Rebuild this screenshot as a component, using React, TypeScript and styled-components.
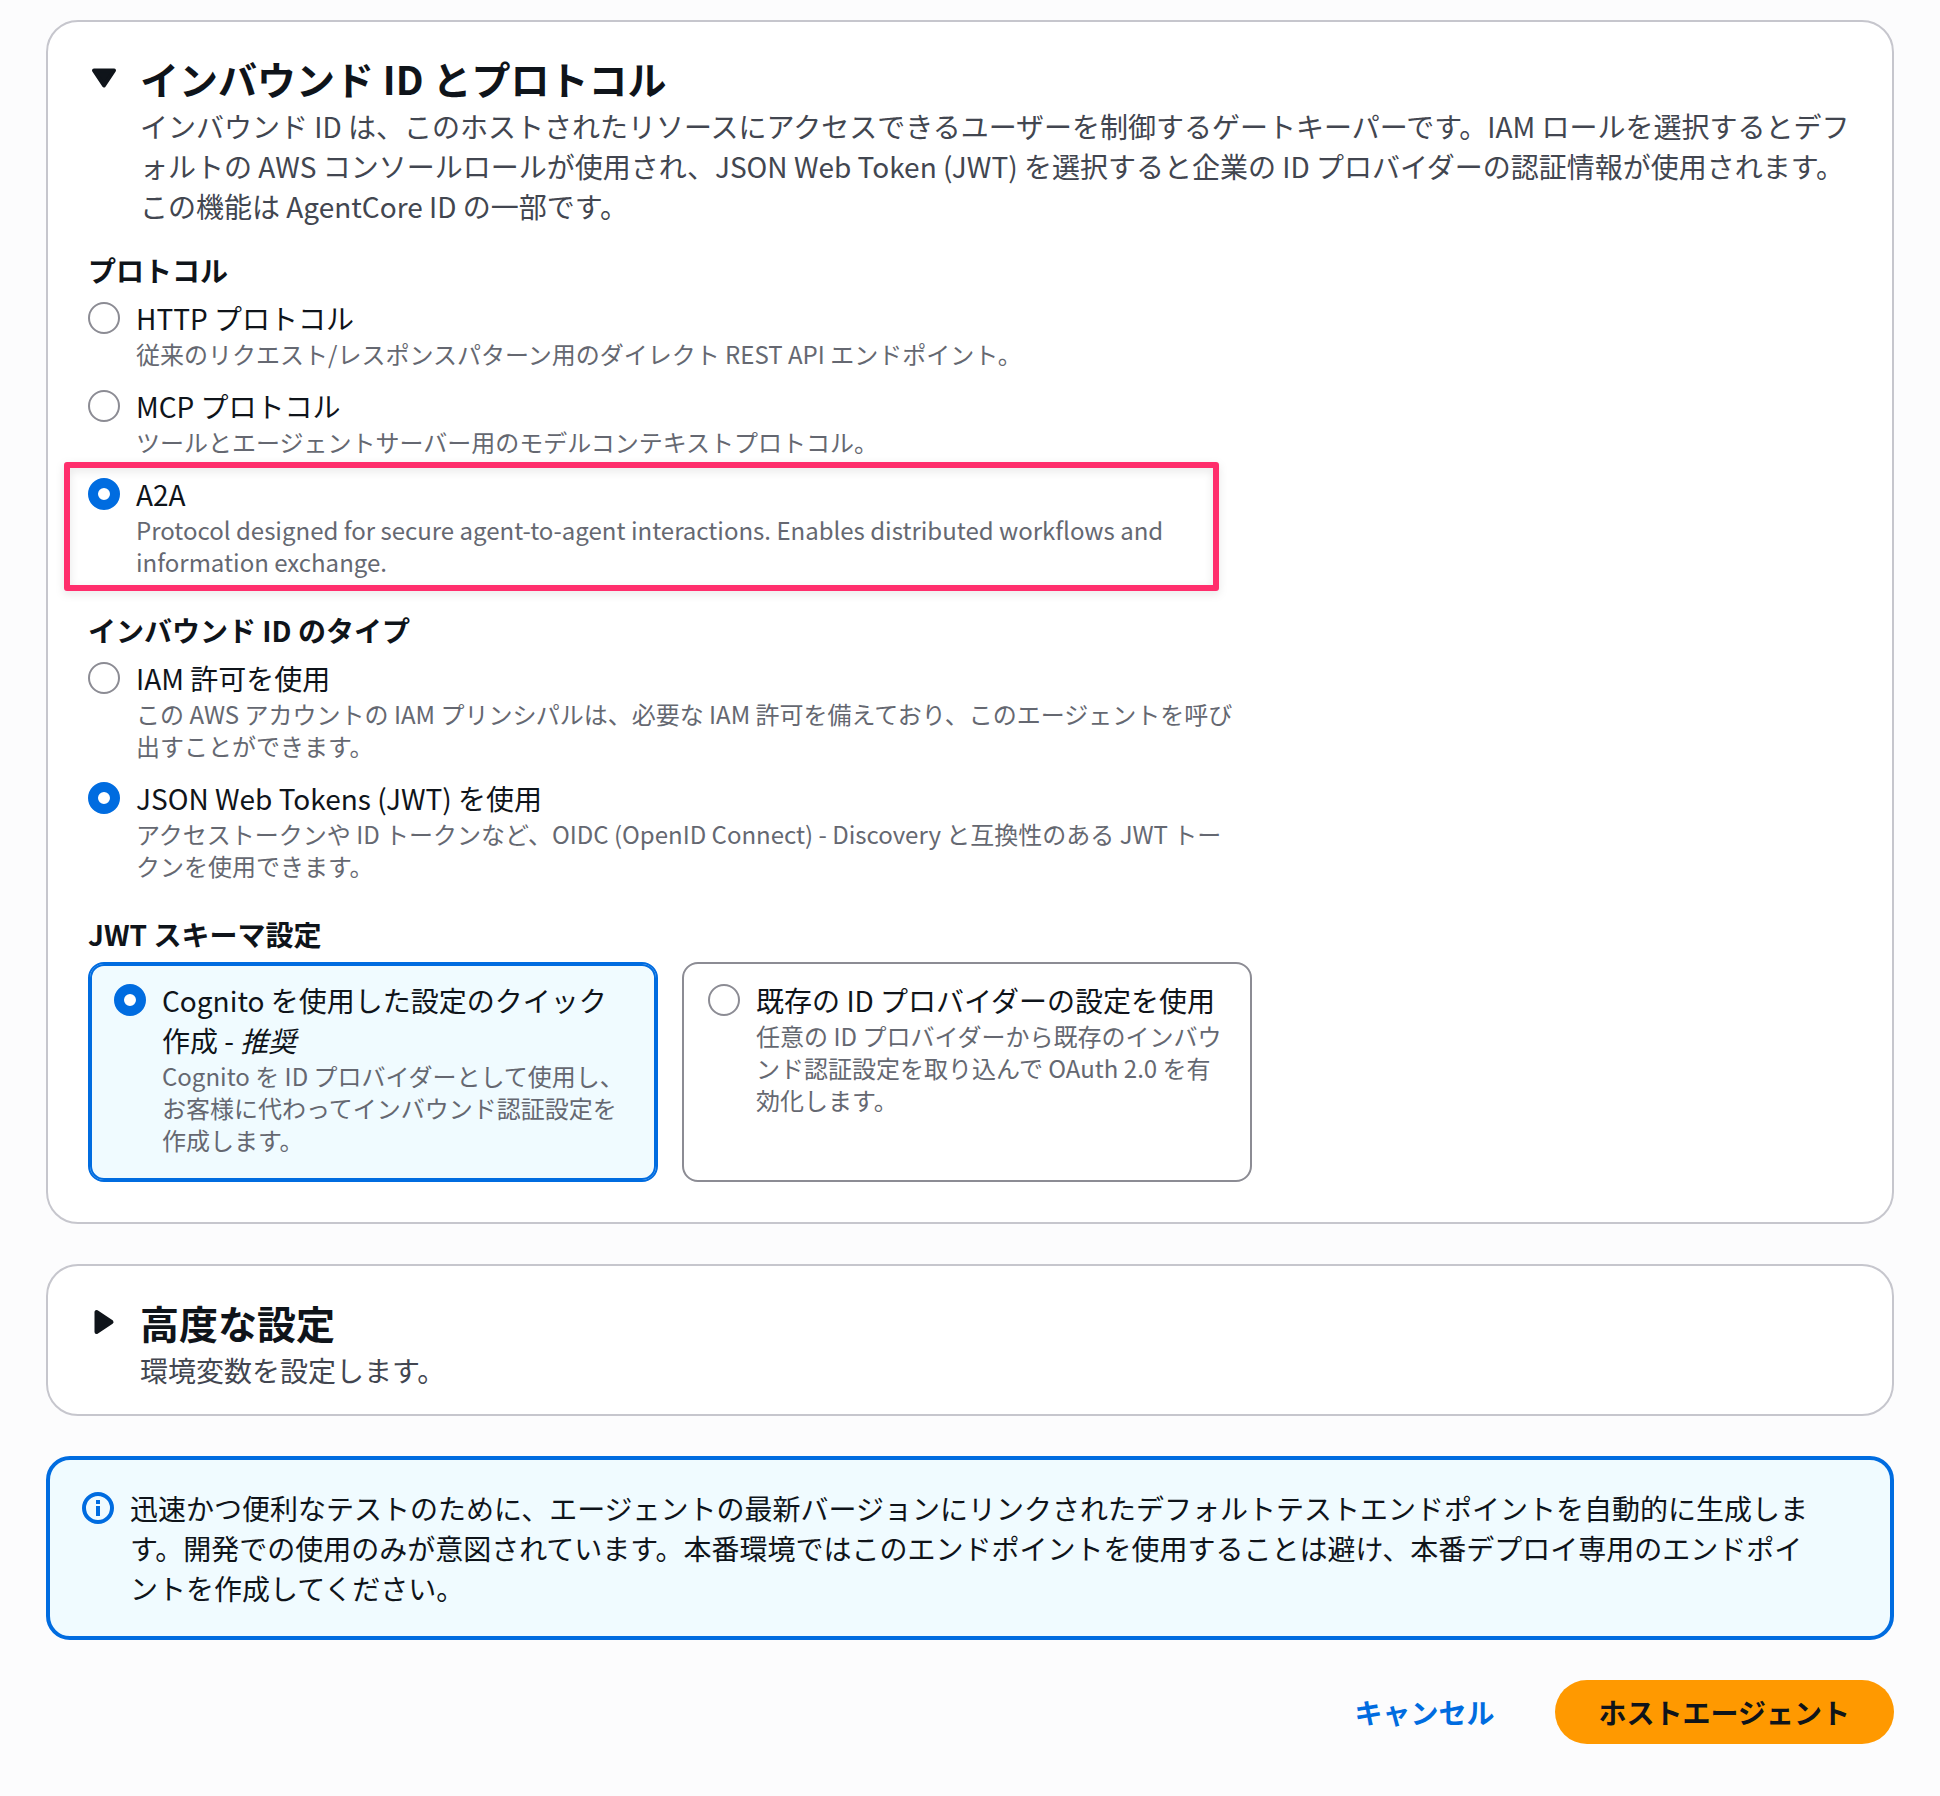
import React, { useId, useState } from "react";
import styled, { createGlobalStyle, css } from "styled-components";

const color = {
  page: "#fcfcfd",
  surface: "#ffffff",
  divider: "#c6c6cd",
  control: "#8c8c94",
  heading: "#0f141a",
  body: "#424650",
  secondary: "#656871",
  accent: "#006ce0",
  accentSoft: "#f0fbff",
  primary: "#ff9900",
  marker: "#ff2e6c",
};

const GlobalStyle = createGlobalStyle`
  *, *::before, *::after { box-sizing: border-box; }
  body {
    margin: 0;
    background: ${color.page};
    color: ${color.heading};
    font: 400 28px/40px "Noto Sans CJK JP", "Noto Sans", sans-serif;
  }
`;

const Page = styled.main`
  display: flex;
  flex-direction: column;
  gap: 40px;
  padding: 20px 46px 52px;
`;

const Card = styled.section`
  background: ${color.surface};
  border: 2px solid ${color.divider};
  border-radius: 32px;
`;

const CardHeader = styled.header`
  display: flex;
  flex-direction: column;
  gap: 4px;
  padding: 32px 40px 24px;
`;

const CardTitle = styled.h2`
  margin: 0;
  font-size: 39px;
  line-height: 48px;
  font-weight: 700;
`;

const Toggle = styled.button`
  display: flex;
  align-items: center;
  gap: 20px;
  padding: 0;
  border: 0;
  background: none;
  color: inherit;
  font: inherit;
  text-align: left;
  cursor: pointer;
`;

const Caret = styled.svg<{ $open: boolean }>`
  width: 32px;
  height: 32px;
  flex: none;
  fill: currentColor;
  stroke: currentColor;
  transform: rotate(${(p) => (p.$open ? 90 : 0)}deg);
`;

const CardDescription = styled.p`
  margin: 0;
  padding-left: 52px;
  color: ${color.body};
`;

const CardBody = styled.div`
  padding: 0 40px 40px;
`;

const FieldColumn = styled.div`
  display: flex;
  flex-direction: column;
  gap: 32px;
  width: 66%;
`;

const Field = styled.fieldset`
  margin: 0;
  padding: 0;
  border: 0;
  min-width: 0;
`;

const Legend = styled.legend`
  padding: 0;
  margin-bottom: 8px;
  font-weight: 700;
`;

const OptionList = styled.div`
  display: flex;
  flex-direction: column;
  gap: 16px;
`;

const TileGrid = styled.div`
  display: grid;
  grid-template-columns: 1fr 1fr;
  gap: 24px;
`;

const optionLayout = css`
  display: flex;
  align-items: flex-start;
  gap: 16px;
  cursor: pointer;
`;

const Option = styled.label`
  ${optionLayout}
  position: relative;
  padding-right: 12px;
`;

const Tile = styled.label<{ $selected: boolean }>`
  ${optionLayout}
  padding: 16px 24px 24px;
  border: 2px solid ${(p) => (p.$selected ? color.accent : color.control)};
  border-radius: 16px;
  background: ${(p) => (p.$selected ? color.accentSoft : color.surface)};
  box-shadow: ${(p) => (p.$selected ? `inset 0 0 0 2px ${color.accent}` : "none")};
`;

const Radio = styled.input`
  appearance: none;
  flex: none;
  width: 32px;
  height: 32px;
  margin: 4px 0;
  border: 2px solid ${color.control};
  border-radius: 50%;
  background: ${color.surface};
  &:checked {
    border: 10px solid ${color.accent};
  }
`;

const OptionText = styled.span`
  display: flex;
  flex-direction: column;
  min-width: 0;
`;

const OptionHint = styled.span`
  font-size: 24px;
  line-height: 32px;
  color: ${color.secondary};
`;

const Highlight = styled.span`
  position: absolute;
  inset: -12px 33px -13px -24px;
  border: 6px solid ${color.marker};
  border-radius: 3px;
  filter: drop-shadow(0 3px 4px rgba(0, 0, 0, 0.1));
  pointer-events: none;
`;

const Notice = styled.aside`
  display: flex;
  align-items: flex-start;
  gap: 16px;
  padding: 28px 64px 28px 32px;
  border: 4px solid ${color.accent};
  border-radius: 24px;
  background: ${color.accentSoft};
`;

const NoticeText = styled.p`
  margin: 0;
`;

const InfoGlyph = styled.svg`
  width: 32px;
  height: 32px;
  flex: none;
  margin: 4px 0;
  fill: none;
  stroke: ${color.accent};
  stroke-width: 2;
`;

const Actions = styled.div`
  display: flex;
  justify-content: flex-end;
  gap: 16px;
`;

const Button = styled.button<{ $primary?: boolean }>`
  padding: 12px 44px;
  border: 0;
  border-radius: 32px;
  background: ${(p) => (p.$primary ? color.primary : "transparent")};
  color: ${(p) => (p.$primary ? color.heading : color.accent)};
  font: inherit;
  font-weight: 700;
  cursor: pointer;
`;

type SectionProps = {
  title: string;
  description: string;
  defaultOpen?: boolean;
  children?: React.ReactNode;
};

function Section({ title, description, defaultOpen = false, children }: SectionProps) {
  const [open, setOpen] = useState(defaultOpen);
  return (
    <Card>
      <CardHeader>
        <CardTitle>
          <Toggle type="button" aria-expanded={open} onClick={() => setOpen(!open)}>
            <Caret viewBox="0 0 16 16" $open={open} aria-hidden="true">
              <path d="M4.25 3v10l7.5-5z" strokeWidth="2" strokeLinejoin="round" />
            </Caret>
            {title}
          </Toggle>
        </CardTitle>
        <CardDescription>{description}</CardDescription>
      </CardHeader>
      {open && children ? (
        <CardBody>
          <FieldColumn>{children}</FieldColumn>
        </CardBody>
      ) : null}
    </Card>
  );
}

type Choice = {
  value: string;
  label: React.ReactNode;
  hint: string;
  highlighted?: boolean;
};

type ChoiceFieldProps = {
  legend: string;
  choices: Choice[];
  initial: string;
  tiles?: boolean;
};

function ChoiceField({ legend, choices, initial, tiles = false }: ChoiceFieldProps) {
  const name = useId();
  const [selected, setSelected] = useState(initial);

  const content = (choice: Choice) => (
    <>
      <Radio
        type="radio"
        name={name}
        value={choice.value}
        checked={selected === choice.value}
        onChange={() => setSelected(choice.value)}
      />
      <OptionText>
        <span>{choice.label}</span>
        <OptionHint>{choice.hint}</OptionHint>
      </OptionText>
    </>
  );

  return (
    <Field>
      <Legend>{legend}</Legend>
      {tiles ? (
        <TileGrid>
          {choices.map((choice) => (
            <Tile key={choice.value} $selected={selected === choice.value}>
              {content(choice)}
            </Tile>
          ))}
        </TileGrid>
      ) : (
        <OptionList>
          {choices.map((choice) => (
            <Option key={choice.value}>
              {content(choice)}
              {choice.highlighted ? <Highlight /> : null}
            </Option>
          ))}
        </OptionList>
      )}
    </Field>
  );
}

const protocols: Choice[] = [
  {
    value: "http",
    label: "HTTP プロトコル",
    hint: "従来のリクエスト/レスポンスパターン用のダイレクト REST API エンドポイント。",
  },
  {
    value: "mcp",
    label: "MCP プロトコル",
    hint: "ツールとエージェントサーバー用のモデルコンテキストプロトコル。",
  },
  {
    value: "a2a",
    label: "A2A",
    hint: "Protocol designed for secure agent-to-agent interactions. Enables distributed workflows and information exchange.",
    highlighted: true,
  },
];

const identityTypes: Choice[] = [
  {
    value: "iam",
    label: "IAM 許可を使用",
    hint: "この AWS アカウントの IAM プリンシパルは、必要な IAM 許可を備えており、このエージェントを呼び出すことができます。",
  },
  {
    value: "jwt",
    label: "JSON Web Tokens (JWT) を使用",
    hint: "アクセストークンや ID トークンなど、OIDC (OpenID Connect) - Discovery と互換性のある JWT トークンを使用できます。",
  },
];

const schemas: Choice[] = [
  {
    value: "cognito",
    label: (
      <>
        Cognito を使用した設定のクイック作成 - <em>推奨</em>
      </>
    ),
    hint: "Cognito を ID プロバイダーとして使用し、お客様に代わってインバウンド認証設定を作成します。",
  },
  {
    value: "existing",
    label: "既存の ID プロバイダーの設定を使用",
    hint: "任意の ID プロバイダーから既存のインバウンド認証設定を取り込んで OAuth 2.0 を有効化します。",
  },
];

export default function App() {
  return (
    <Page lang="ja">
      <GlobalStyle />
      <Section
        defaultOpen
        title="インバウンド ID とプロトコル"
        description="インバウンド ID は、このホストされたリソースにアクセスできるユーザーを制御するゲートキーパーです。IAM ロールを選択するとデフォルトの AWS コンソールロールが使用され、JSON Web Token (JWT) を選択すると企業の ID プロバイダーの認証情報が使用されます。この機能は AgentCore ID の一部です。"
      >
        <ChoiceField legend="プロトコル" choices={protocols} initial="a2a" />
        <ChoiceField legend="インバウンド ID のタイプ" choices={identityTypes} initial="jwt" />
        <ChoiceField legend="JWT スキーマ設定" choices={schemas} initial="cognito" tiles />
      </Section>
      <Section title="高度な設定" description="環境変数を設定します。" />
      <Notice>
        <InfoGlyph viewBox="0 0 16 16" aria-hidden="true">
          <circle cx="8" cy="8" r="7" />
          <path d="M8 4v2M8 7v5" />
        </InfoGlyph>
        <NoticeText>
          迅速かつ便利なテストのために、エージェントの最新バージョンにリンクされたデフォルトテストエンドポイントを自動的に生成します。開発での使用のみが意図されています。本番環境ではこのエンドポイントを使用することは避け、本番デプロイ専用のエンドポイントを作成してください。
        </NoticeText>
      </Notice>
      <Actions>
        <Button type="button">キャンセル</Button>
        <Button type="button" $primary>
          ホストエージェント
        </Button>
      </Actions>
    </Page>
  );
}
